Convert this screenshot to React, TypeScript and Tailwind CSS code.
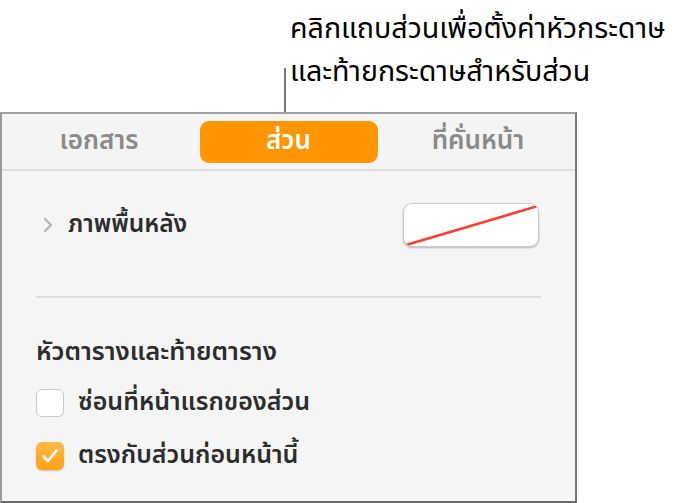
import { ChevronRight } from "lucide-react";

const thai = "font-['Noto_Sans_Thai','Noto_Sans','DejaVu_Sans',sans-serif]";

function Tab({ label, active }: { label: string; active?: boolean }) {
  return (
    <div
      className={`flex h-[42px] w-[178px] items-center justify-center rounded-[9px] text-[26px] font-semibold ${
        active ? "bg-[#ff9500] text-white" : "text-[#8a8a8a]"
      }`}
    >
      {label}
    </div>
  );
}

function Checkbox({ checked, label }: { checked?: boolean; label: string }) {
  return (
    <div className="flex h-[28px] items-center gap-[14px]">
      {checked ? (
        <div className="flex h-[28px] w-[28px] items-center justify-center rounded-[6px] bg-gradient-to-b from-[#ffbb45] to-[#ffa00f] shadow-[0_1px_2px_rgba(0,0,0,0.2)]">
          <svg width="18" height="16" viewBox="0 0 18 16" fill="none">
            <path d="M2.5 8.5 L7 13 L15.5 2.5" stroke="white" strokeWidth="2.6" strokeLinecap="round" strokeLinejoin="round" />
          </svg>
        </div>
      ) : (
        <div className="h-[28px] w-[28px] rounded-[6px] border border-[#c8c8c8] bg-white" />
      )}
      <span className="text-[25px] font-semibold text-[#2d2d2d]">{label}</span>
    </div>
  );
}

export default function App() {
  return (
    <div className={`relative h-[503px] w-[678px] overflow-hidden bg-white ${thai}`}>
      <div className="pl-[290px] pt-[8px] text-[28.6px] leading-[43px] text-black">
        <div>คลิกแถบส่วนเพื่อตั้งค่าหัวกระดาษ</div>
        <div>และท้ายกระดาษสำหรับส่วน</div>
      </div>

      {/* leader line */}
      <div className="absolute left-[284px] top-[68px] h-[54px] w-[2px] bg-[#7a7a7a]" />

      <div className="absolute left-0 top-[112px] h-[391px] w-[577px] border-l-2 border-t-2 border-b-2 border-r-2 border-l-[#9a9a9a] border-t-[#a0a0a0] border-r-[#7a7a7a] border-b-[#6a6a6a] bg-[#f5f5f5]">
        <div className="flex h-[57px] items-center justify-between border-b-2 border-[#dedede] bg-[#f4f4f4] px-[8px]">
          <Tab label="เอกสาร" />
          <Tab label="ส่วน" active />
          <Tab label="ที่คั่นหน้า" />
        </div>

        <div className="px-[34px]">
          <div className="flex items-center justify-between border-b-2 border-[#dddddd] pb-[49px] pt-[32px]">
            <div className="flex items-center gap-[8px]">
              <ChevronRight className="h-[24px] w-[24px] text-[#b5b5b5]" strokeWidth={2.2} />
              <span className="text-[24.5px] font-semibold text-[#2d2d2d]">ภาพพื้นหลัง</span>
            </div>
            <div className="relative mr-[2px] h-[44px] w-[136px] overflow-hidden rounded-[9px] border border-[#c9c9c9] bg-white shadow-[0_1px_2px_rgba(0,0,0,0.25)]">
              <svg className="absolute inset-0" width="136" height="44" viewBox="0 0 136 44">
                <line x1="2" y1="41" x2="134" y2="2" stroke="#ff3b30" strokeWidth="2.6" />
              </svg>
            </div>
          </div>

          <div className="pt-[36px] text-[25.5px] font-semibold leading-[36px] text-[#2d2d2d]">หัวตารางและท้ายตาราง</div>
          <div className="mt-[19px] flex flex-col gap-[25px]">
            <Checkbox label="ซ่อนที่หน้าแรกของส่วน" />
            <Checkbox label="ตรงกับส่วนก่อนหน้านี้" checked />
          </div>
        </div>
      </div>
    </div>
  );
}
